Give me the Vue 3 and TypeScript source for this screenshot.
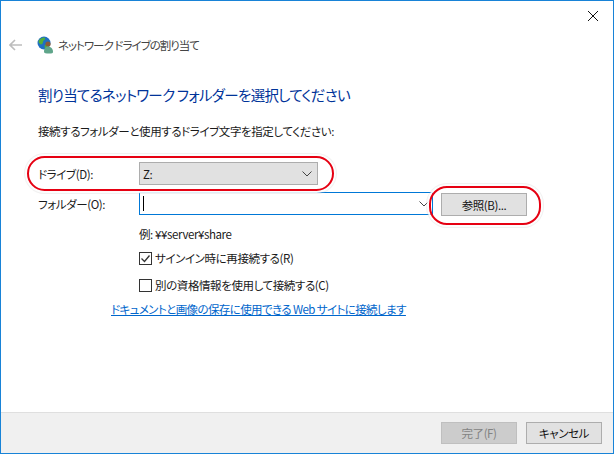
<script setup lang="ts">
const title = 'ネットワーク ドライブの割り当て'
</script>

<template>
  <div class="win">
    <div class="titlebar">
      <svg class="close" width="12" height="12" viewBox="0 0 12 12"><path d="M1 1l10 10M11 1L1 11" stroke="#111" stroke-width="1" fill="none" /></svg>
    </div>
    <div class="nav">
      <svg class="back" width="14" height="12" viewBox="0 0 14 12"><path d="M6 1L1 6l5 5M1 6h12" stroke="#bdbdbd" stroke-width="1.6" fill="none" /></svg>
      <svg class="globe" width="17" height="18" viewBox="0 0 17 18">
        <circle cx="7" cy="7" r="6.5" fill="#1f6fc4" />
        <path d="M2 4c2-2 5-3 6-2 1 2-2 2-2 4s-2 3-3 2-2-2-1-4zM8 9c2-1 3 0 3 1s-1 3-2 3-2-3-1-4z" fill="#4fae3c" />
        <circle cx="11" cy="8" r="2.6" fill="#8a5a38" />
        <path d="M7 16c0-4 2-5.500 4-5.500s5 1.500 5 5.500c0 1-1 1.500-4 1.500s-5-.5-5-1.500z" fill="#5fa58a" />
      </svg>
      <span class="navtitle">{{ title }}</span>
    </div>
    <main class="body">
      <h1>割り当てるネットワーク フォルダーを選択してください</h1>
      <p class="desc">接続するフォルダーと使用するドライブ文字を指定してください:</p>
      <div class="form">
        <label>ドライブ(D):</label>
        <div class="select">
          <span>Z:</span>
          <svg width="10" height="6" viewBox="0 0 10 6"><path d="M.5.5L5 5 9.500.5" stroke="#444" fill="none" /></svg>
        </div>
        <label class="l2">フォルダー(O):</label>
        <div class="folder">
          <div class="input">
            <i class="caret"></i>
            <svg width="10" height="6" viewBox="0 0 10 6"><path d="M.5.5L5 5 9.500.5" stroke="#444" fill="none" /></svg>
          </div>
          <button class="btn browse">参照(B)...</button>
        </div>
      </div>
      <div class="opts">
        <div class="eg">例: ¥¥server¥share</div>
        <div class="check first">
          <svg width="13" height="13" viewBox="0 0 13 13"><rect x=".5" y=".5" width="12" height="12" fill="#fff" stroke="#333" /><path d="M2.500 6.500l3 3 5-6" stroke="#333" stroke-width="1.300" fill="none" /></svg>
          <span>サインイン時に再接続する(R)</span>
        </div>
        <div class="check">
          <svg width="13" height="13" viewBox="0 0 13 13"><rect x=".5" y=".5" width="12" height="12" fill="#fff" stroke="#333" /></svg>
          <span>別の資格情報を使用して接続する(C)</span>
        </div>
      </div>
      <a class="link">ドキュメントと画像の保存に使用できる Web サイトに接続します</a>
    </main>
    <footer>
      <button class="btn disabled">完了(F)</button>
      <button class="btn">キャンセル</button>
    </footer>
    <div class="oval o1"></div>
    <div class="oval o2"></div>
  </div>
</template>

<style>
html, body { margin: 0; background: #fff; }
</style>

<style scoped>
.win {
  position: relative;
  box-sizing: border-box;
  width: 614px;
  height: 454px;
  border: 1px solid #1883d7;
  background: #fff;
  display: flex;
  flex-direction: column;
  font-family: "Noto Sans CJK JP", "Noto Sans", sans-serif;
  font-size: 11.500px;
  letter-spacing: -.4px;
  font-feature-settings: "palt";
  color: #1a1a1a;
  overflow: hidden;
}
.titlebar {
  height: 29px;
  flex: none;
  display: flex;
  justify-content: flex-end;
  align-items: center;
  padding-right: 14px;
}
.nav {
  height: 30px;
  flex: none;
  display: flex;
  align-items: center;
  padding-left: 8px;
}
.globe { margin-left: 14px; }
.navtitle { margin-left: 4px; color: #444; letter-spacing: -1px; }
.body { flex: 1; min-height: 0; display: flex; flex-direction: column; }
h1 {
  margin: 24px 0 0 37px;
  font-size: 14.500px;
  line-height: 22px;
  font-weight: 400;
  letter-spacing: -.7px;
  color: #003399;
}
.desc { margin: 16px 0 0 37px; line-height: 18px; }
.form {
  margin: 22px 0 0 37px;
  display: grid;
  grid-template-columns: 101px auto;
  row-gap: 7px;
  align-items: center;
}
.select {
  box-sizing: border-box;
  width: 179px;
  height: 23px;
  background: #e1e1e1;
  border: 1px solid #adadad;
  display: flex;
  align-items: center;
  justify-content: space-between;
  padding: 0 5px 0 3px;
}
.folder { display: flex; align-items: flex-start; gap: 8px; }
.input {
  box-sizing: border-box;
  width: 294px;
  height: 23px;
  border: 1px solid #0078d7;
  display: flex;
  align-items: center;
  justify-content: space-between;
  padding: 0 3px 0 3px;
}
.caret { width: 1px; height: 15px; background: #000; }
.btn {
  box-sizing: border-box;
  width: 76px;
  height: 22px;
  padding: 0;
  border: 1px solid #adadad;
  background: #e1e1e1;
  font: inherit;
  letter-spacing: inherit;
  font-feature-settings: inherit;
  color: #111;
}
.browse { width: 86px; height: 23px; margin-top: 1px; }
.opts { margin-left: 138px; display: flex; flex-direction: column; }
.eg { margin-top: 9px; line-height: 18px; }
.check { display: flex; align-items: center; gap: 3px; height: 18px; margin-top: 9px; }
.check.first { margin-top: 6px; }
.link {
  margin: 6px 0 0 110px;
  line-height: 18px;
  color: #0066cc;
  text-decoration: underline;
  letter-spacing: -.6px;
}
footer {
  height: 41px;
  flex: none;
  box-sizing: border-box;
  background: #f0f0f0;
  border-top: 1px solid #dfdfdf;
  display: flex;
  justify-content: flex-end;
  align-items: flex-start;
  gap: 9px;
  padding: 9px 11px 0 0;
}
.disabled { background: #ccc; color: #838383; border-color: #bfbfbf; }
.oval {
  position: absolute;
  box-sizing: border-box;
  border: 2px solid #e60012;
  border-radius: 18px;
  box-shadow: 0 0 0 2px rgba(255, 255, 255, .85), 0 0 0 3px rgba(200, 200, 200, .25);
  pointer-events: none;
}
.o1 { left: 26px; top: 155px; width: 307px; height: 35px; }
.o2 { left: 428px; top: 185px; width: 112px; height: 39px; }
</style>
